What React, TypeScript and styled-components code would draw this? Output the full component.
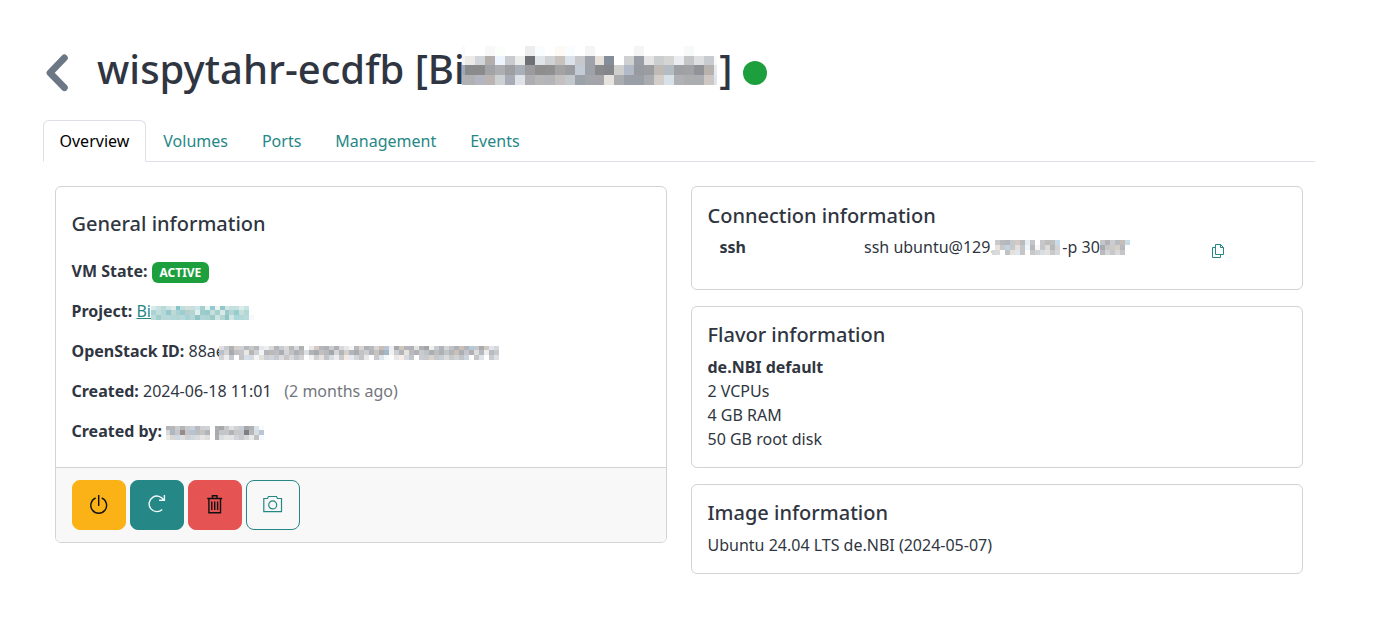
import React from 'react';
import styled, { createGlobalStyle, css } from 'styled-components';

const GlobalStyle = createGlobalStyle`
  *, *::before, *::after { box-sizing: border-box; }
  body {
    margin: 0;
    background: #fff;
    color: #303641;
    font-family: "Noto Sans", "Liberation Sans", sans-serif;
    font-size: 16px;
    line-height: 24px;
  }
`;

const Page = styled.main`
  width: 1272px;
  margin-left: 42.5px;
  padding-top: 45px;
`;

const Header = styled.header`
  display: flex;
  align-items: flex-start;
  height: 51px;
`;

const BackButton = styled.button`
  width: 54.6px;
  height: 51px;
  padding: 5px 0 0;
  border: 0;
  background: none;
  display: flex;
  align-items: center;
`;

const Title = styled.h1`
  margin: 0;
  display: flex;
  font-size: 40px;
  font-weight: 500;
  line-height: 48px;
  white-space: pre;
`;

const StatusDot = styled.span`
  width: 24px;
  height: 24px;
  margin: 16px 0 0 10.8px;
  border-radius: 50%;
  background: #1e9f3e;
`;

const Tabs = styled.nav`
  display: flex;
  margin-top: 24px;
  border-bottom: 1px solid #dee2e6;
`;

const Tab = styled.a<{ $active?: boolean }>`
  padding: 8px 16px;
  margin-bottom: -1px;
  border: 1px solid transparent;
  border-radius: 6px 6px 0 0;
  color: #258786;
  ${(p) =>
    p.$active &&
    css`
      color: #000;
      background: #fff;
      border-color: #dcdfe6 #dcdfe6 #fff;
    `}
`;

const Columns = styled.div`
  display: grid;
  grid-template-columns: 1fr 1fr;
  gap: 24px;
  align-items: start;
  padding: 24px 12px 0;
`;

const Stack = styled.div`
  display: flex;
  flex-direction: column;
  gap: 16px;
`;

const Card = styled.section<{ $height?: number }>`
  height: ${(p) => (p.$height ? `${p.$height}px` : 'auto')};
  border: 1px solid #d2d3d4;
  border-radius: 6px;
  overflow: hidden;
`;

const CardBody = styled.div<{ $top?: number; $bottom?: number }>`
  padding: ${(p) => `${p.$top ?? 16}px 16px ${p.$bottom ?? 16}px`};
`;

const CardTitle = styled.h5<{ $gap?: number }>`
  margin: 0 0 ${(p) => p.$gap ?? 8}px;
  font-size: 20px;
  font-weight: 500;
  line-height: 24px;
`;

const Facts = styled.div`
  display: flex;
  flex-direction: column;
  gap: 16px;
`;

const Fact = styled.div`
  display: flex;
  height: 24px;
  white-space: pre;
`;

const Badge = styled.span`
  align-self: flex-start;
  height: 21px;
  margin-top: 3px;
  padding: 0 7.8px;
  border-radius: 6px;
  background: #1e9f3e;
  color: #fff;
  font-size: 12px;
  font-weight: 700;
  line-height: 21px;
`;

const ProjectLink = styled.a`
  color: #258786;
  text-decoration: underline;
`;

const Muted = styled.span`
  margin-left: 12.7px;
  color: #73777d;
`;

const CardFooter = styled.footer`
  display: flex;
  gap: 4px;
  padding: 12px 16px;
  border-top: 1px solid #d2d3d4;
  background: #f8f8f8;
`;

const ActionButton = styled.button<{ $bg: string; $fg: string; $border?: string }>`
  width: 54px;
  height: 50px;
  padding: 0;
  display: grid;
  place-items: center;
  border: 1px solid ${(p) => p.$border ?? p.$bg};
  border-radius: 8px;
  background: ${(p) => p.$bg};
  color: ${(p) => p.$fg};
`;

const ConnectionRow = styled.div`
  display: grid;
  grid-template-columns: 144.5px 347px auto;
  padding-left: 12px;
`;

const Command = styled.span`
  display: flex;
  white-space: pre;
`;

const CopyIcon = styled.svg`
  margin-top: 8px;
  color: #258786;
`;

const MosaicSvg = styled.svg<{ $top: number; $left: number; $right: number }>`
  display: block;
  flex: none;
  margin: ${(p) => `${p.$top}px ${p.$right}px 0 ${p.$left}px`};
`;

/* Each row is a list of colours, one per column; "-" leaves the cell blank. */
interface MosaicProps {
  rows: string[];
  widths: number[];
  heights: number[];
  top: number;
  left?: number;
  right?: number;
}

function Mosaic({ rows, widths, heights, top, left = 0, right = 0 }: MosaicProps) {
  const sum = (a: number[]) => a.reduce((s, n) => s + n, 0);
  return (
    <MosaicSvg
      width={sum(widths)}
      height={sum(heights)}
      $top={top}
      $left={left}
      $right={right}
      shapeRendering="crispEdges"
      aria-hidden="true"
    >
      {rows.map((row, r) =>
        row.split(' ').map((c, i) =>
          c === '-' ? null : (
            <rect
              key={`${r}-${i}`}
              x={sum(widths.slice(0, i))}
              y={sum(heights.slice(0, r))}
              width={widths[i]}
              height={heights[r]}
              fill={`#${c}`}
            />
          ),
        ),
      )}
    </MosaicSvg>
  );
}

const cols = (n: number, w: number) => Array.from({ length: n }, () => w);

/* 27 columns over 255px */
const titleMask = {
  widths: [3, ...cols(13, 10), 9, ...cols(11, 10), 3],
  heights: [10, 9, 10, 10],
  rows: [
    'fafafa - - f8f8f8 fcfefc - - ededed fafdff - fdfaf5 fafdff - f5f5f5 - - - - f5f5f5 - - - - f8fafa - - -',
    'f4f4f4 ecebe9 d2d6da b3adab edf4fd c9cacd ececec 6f7176 dfe5e8 d0d2d4 c8c2be dbe2ea c6c8cb 9fa2ab e6e0da 848e9a - cfd0d1 999da5 e4e4e4 cccdce d5d5d4 ebedf0 c4c5c7 dedfe1 c8cbcf fafafa',
    'a2a8b6 8a8b8d 8b8b8c a2a3a6 adaeb1 9e9fa3 a8afb9 9b9b9d 8e8e8f 909090 a3a3a5 9b9c9f c3ccd6 9fa1a8 88898d 85868a cfcfce b1bac6 979aa1 9c9da2 bfbab6 b5bbc3 9fa0a3 a1a2a5 929398 b8b2ae e4eaf2',
    'b1b2b8 b1b1b4 b3b6c1 bab5b3 cdd1d2 a8acb6 dfe3e9 aeaeb2 b7b7b7 b3b5b9 c3c0bf c3c8cc 9ca2aa a2a5aa a5a5a9 e6e2dd aaacaf 999ea7 9a9ea5 a8abaf d3cdc9 d8e0e8 b0b1b5 acadaf acadb0 cdc6c2 dde5ee',
  ],
};

const fine = (n: number, total: number) =>
  Array.from({ length: n }, (_, i) => Math.round(((i + 1) * total) / n) - Math.round((i * total) / n));

const projectMask = {
  widths: fine(21, 103),
  heights: [4, 5, 5],
  rows: [
    'd8eaea c6e2e1 b9d9d8 cce4e2 dcebea 85c4cb bfdfdc cfe0da c8dfdc cbe7ed aacccb e3f4f5 91cbd2 eef3ef 93c8cb d2e6e6 c4e0df c5e2e3 dcecea c5e4e7 -',
    'acd3d4 c1dedb b4d8d7 94c9cc bdd9d6 a8d2d3 9ccdd0 b7ceca b3d6d4 e0eeec 9bcdcd 9acbcb c8dcd8 a3d0d0 d8e9e5 9ac9ca b4d6d3 95ccce c8deda b2d8d6 -',
    'bddcda a4cfcf bad8d7 b6d8d8 b1d7d8 b5d5d4 b8d9d9 a6d2d7 b5d8d7 92c5c7 b0d6d5 add3d2 9dc9c7 cce5e4 b5d5d2 8ec5c7 d1e5e2 a8d9df b4d7d7 b8dadb f5f9f9',
  ],
};

const idMask = {
  widths: fine(56, 280),
  heights: [4, 5, 5],
  rows: [
    'e0e0e4 c9cacd b0b1b3 d7d0ca cfd1d5 b4b8bf c8c8c8 b7b8ba e4e8ed eceeef d8d9da b5b5b5 c7cdd5 d9d9d9 b9b9bb d5d8dc aeb0b2 - e6e8ea d6c9bf b3b6bb aeb0b3 c9ccd0 b0b0b3 d5d8dc e8e8e8 f5f5f5 b7b9bc d9d4cf aeb1b6 b6babf d5d5d5 c8beb5 b7c5d4 eeeeee a5a8ac d0c6bc b3b5ba b2b2b3 e3e3e4 b0b1b4 a2a4a7 f2eeea c5cbd3 b1b4b8 d3d5d7 bfc1c5 aeb1b6 c7bfb8 b2b6bb b4cad9 c8c8ca a7aaae d1c8bf e1e5eb d6d9dc',
    'b8c0c9 d2d4d5 a7aaaf c0c0c1 c5c6c9 eee7e1 b4b6b8 d0d1d4 f2f3f4 b2b5bb c0b9b3 b9bdc4 abadb0 d4d5d8 c1c1c2 acb0b7 bbbbbb dcdfe3 b2b3b5 a7aaae c3bfbc b7b9be a3a6ab d4d5d7 b3b4b6 d5d0cb b1b5bc a9abae c1c5ca cecece b0b3ba c9c3be a8abaf a4b7c5 f1f1f1 cbcdd0 b2b4b8 e9e2dc b8bac0 b0b1b4 c9cacb bec3ca abaeb3 bdbdbe acb0b7 c2c5c8 b4b5b8 c9c0b9 abaeb3 c4c6ca b0b1b4 dddddd b5bac0 ededed b8bbc0 c6c9cb',
    'd2d3d6 eeeeee c6c9ce fff c4c4c6 d4e0e9 d6d9dd f4f4f4 e3e1df cccfd4 d3d4d7 c6cbd1 dcdcde c7c7c9 d7d9dc c3c7cc d3d3d3 - f1f1f1 cfd0d3 e6e2de c2c4c7 d5dce4 eeeeee c9cacc f3e9e1 e5eaf2 d5d5d5 c3c5c8 e9e9e9 fff c7c9ce dde4ea f6f7f8 - e8e8e8 f9eee6 d5dbe0 c2c4c8 fff c9ccd2 c8c9cc d8d3cf c7c9cc c9ced4 dbdbdb c8c9cb d0d2d5 c2c4c7 ccd4dd fff c4c6c8 e0e4e8 fff c7cace dedfe1',
  ],
};

const creatorMask = {
  widths: [4, ...fine(19, 94)],
  heights: [4, 5, 5],
  rows: [
    'b3b4b6 b5b7bb cbccce b2b5b9 c9c9ca c8d0da b7bbc0 cfd0d1 d2d3d4 - abaeaf a7a8aa c6c9ce e0e0e1 d0d2d3 c7ccd4 a5a6a7 b0b1b5 d9e3ec f9fafc',
    'd6d8da aeb6c0 c5c6c9 968d8b c4c5c8 b5c4d4 bbbdbf c4c4c5 b2b4b7 - a8aaac c2c6ca c5c6c7 b2b3b6 c9c7c5 c3c8d0 7d7e82 b6b7b9 d9dddf b9c6d5',
    'ebebeb dad7d5 cdd9e2 dedfe2 d1d2d4 d0d7df dadbdd e6e6e6 dfdfdf - aaadaf dcdddf e5e5e5 e3e4e4 d0d4da c9c9cb d3d6da eaeaea c1c2c5 f5f8fd',
  ],
};

const ipMask = {
  widths: [3, ...fine(13, 65)],
  heights: [5, 5, 5],
  rows: [
    '- c9c9cb b9babd b6b7ba c4c9cd d6c8c3 b9bbc1 e4edf5 c4c5c8 - c7c7c9 bbbdc1 c0bfbe c7dbe9',
    '- eae2dc c7c8ca c0d3e3 c7c8c9 e2dfdc c3c5c9 edf5fb b7b8ba f8f8f8 c3c5c9 dedad7 b7b8bb d2d3d4',
    'd7d7d8 d9dadd - c1c2c5 e6e0dc dfe7ee c5c5c7 - c8c8c9 d0d3d6 d7dfe5 e5e0dd c8c9cc d8d8d9',
  ],
};

const portMask = {
  widths: fine(6, 30),
  heights: [5, 5, 5],
  rows: [
    'c5c6c9 b1b3b8 cccdcf babdc0 c7bdb8 c9dce8',
    'a8aaad c5c6c8 d0cac6 d3cfcb b6b8bb -',
    'b9bbbe d4d5d6 c7c8ca d9d9d9 c4c5c7 -',
  ],
};

export default function App() {
  return (
    <>
      <GlobalStyle />
      <Page>
        <Header>
          <BackButton aria-label="Back">
            <svg width="28" height="40" viewBox="0 0 28 40" fill="none">
              <path
                d="M21.4 4.9 7 19.8l14.4 14.9"
                stroke="#6b7785"
                strokeWidth="6.8"
                strokeLinecap="round"
                strokeLinejoin="round"
              />
            </svg>
          </BackButton>
          <Title>
            wispytahr-ecdfb [Bi
            <Mosaic {...titleMask} top={1} left={-2.8} right={2.3} />]
          </Title>
          <StatusDot />
        </Header>

        <Tabs>
          <Tab $active>Overview</Tab>
          <Tab>Volumes</Tab>
          <Tab>Ports</Tab>
          <Tab>Management</Tab>
          <Tab>Events</Tab>
        </Tabs>

        <Columns>
          <Card>
            <CardBody $top={25} $bottom={24}>
              <CardTitle $gap={23}>General information</CardTitle>
              <Facts>
                <Fact>
                  <b>VM State: </b>
                  <Badge>ACTIVE</Badge>
                </Fact>
                <Fact>
                  <b>Project: </b>
                  <ProjectLink>Bi</ProjectLink>
                  <Mosaic {...projectMask} top={7} />
                </Fact>
                <Fact>
                  <b>OpenStack ID: </b>
                  <span>88ae</span>
                  <Mosaic {...idMask} top={7} left={-6} />
                </Fact>
                <Fact>
                  <b>Created: </b>
                  <span>2024-06-18 11:01</span>
                  <Muted>(2 months ago)</Muted>
                </Fact>
                <Fact>
                  <b>Created by: </b>
                  <Mosaic {...creatorMask} top={7} />
                </Fact>
              </Facts>
            </CardBody>
            <CardFooter>
              <ActionButton $bg="#fab216" $fg="#111" aria-label="Power">
                <svg width="20" height="20" viewBox="0 0 20 20" fill="none" stroke="currentColor" strokeWidth="1.4" strokeLinecap="round">
                  <path d="M9.7.2v10.2M6.3 3.2a7.9 7.9 0 1 0 6.8 0" />
                </svg>
              </ActionButton>
              <ActionButton $bg="#258786" $fg="#f4fafa" aria-label="Restart">
                <svg width="20" height="20" viewBox="0 0 20 20" fill="none" stroke="currentColor" strokeWidth="1.4">
                  <path d="M15.2 14.6A7.8 7.8 0 1 1 16.8 5.2M17.4 0v5.3h-5.3" />
                </svg>
              </ActionButton>
              <ActionButton $bg="#e55353" $fg="#111" aria-label="Delete">
                <svg width="20" height="20" viewBox="0 0 20 20" fill="none" stroke="currentColor" strokeWidth="1.4">
                  <path d="M2.2 3.5h15M7.4 3.4V.8h4.6v2.6M3.9 3.8v13.9h11.6V3.8M6.8 6.5v8.5M9.7 6.5v8.5M12.6 6.5v8.5" />
                </svg>
              </ActionButton>
              <ActionButton $bg="#f8f8f8" $fg="#258786" $border="#258786" aria-label="Snapshot">
                <svg width="20" height="20" viewBox="0 0 20 20" fill="none" stroke="currentColor" strokeWidth="1.2">
                  <path d="M.8 3.5h3.7l1-2h8l1 2h4v13.2H.8z" />
                  <circle cx="9.7" cy="9.9" r="4" />
                </svg>
              </ActionButton>
            </CardFooter>
          </Card>

          <Stack>
            <Card $height={104}>
              <CardBody $top={17}>
                <CardTitle $gap={7}>Connection information</CardTitle>
                <ConnectionRow>
                  <b>ssh</b>
                  <Command>
                    ssh ubuntu@129.
                    <Mosaic {...ipMask} top={5} left={-3} right={-1.5} /> -p 30
                    <Mosaic {...portMask} top={5} />
                  </Command>
                  <CopyIcon width="14" height="16" viewBox="0 0 14 16" fill="none" stroke="currentColor" strokeWidth="1">
                    <path d="M4.5 1.5h5l3 3v7h-8zM9.5 1.5v3h3M4 4.5H1.5v10h8V12" />
                  </CopyIcon>
                </ConnectionRow>
              </CardBody>
            </Card>
            <Card>
              <CardBody>
                <CardTitle>Flavor information</CardTitle>
                <b>de.NBI default</b>
                <div>2 VCPUs</div>
                <div>4 GB RAM</div>
                <div>50 GB root disk</div>
              </CardBody>
            </Card>
            <Card>
              <CardBody>
                <CardTitle>Image information</CardTitle>
                <div>Ubuntu 24.04 LTS de.NBI (2024-05-07)</div>
              </CardBody>
            </Card>
          </Stack>
        </Columns>
      </Page>
    </>
  );
}
